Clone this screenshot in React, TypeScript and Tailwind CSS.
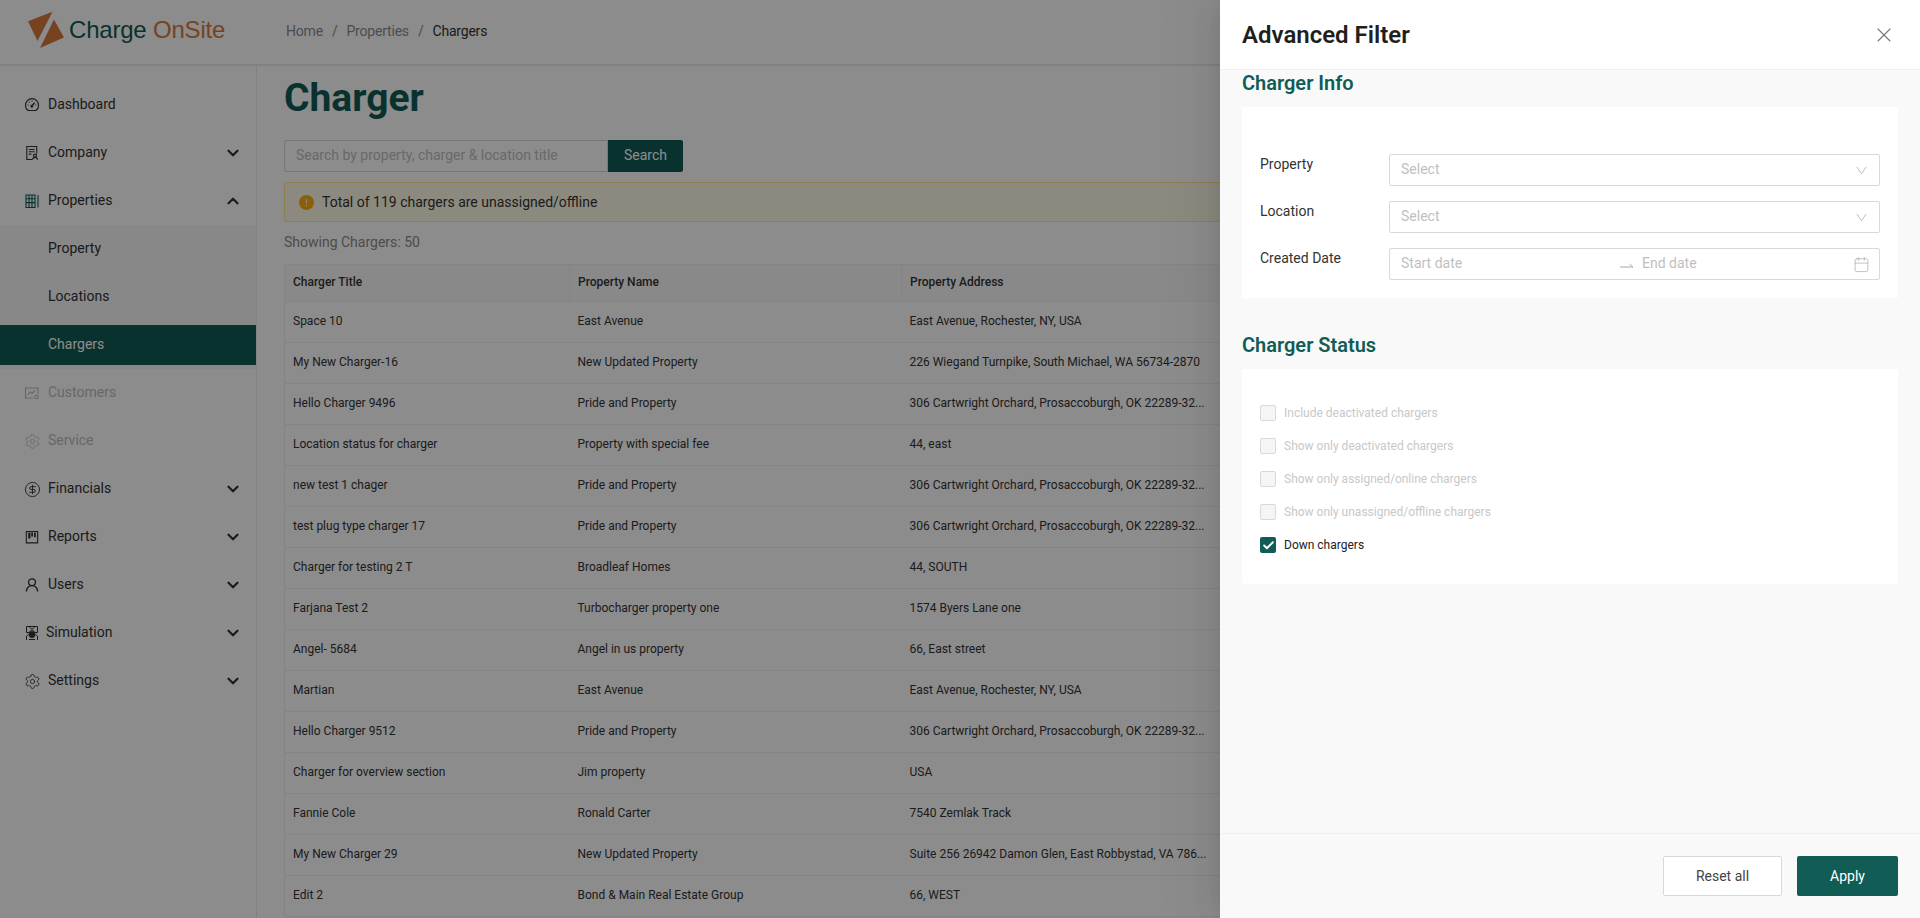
import { ChevronDown, ChevronUp, Settings, CircleDollarSign, X, Check, Calendar } from "lucide-react"
import { AiFillExclamationCircle } from "react-icons/ai"
import type { ReactNode } from "react"

const rows = [
  ["Space 10", "East Avenue", "East Avenue, Rochester, NY, USA"],
  ["My New Charger-16", "New Updated Property", "226 Wiegand Turnpike, South Michael, WA 56734-2870"],
  ["Hello Charger 9496", "Pride and Property", "306 Cartwright Orchard, Prosaccoburgh, OK 22289-32..."],
  ["Location status for charger", "Property with special fee", "44, east"],
  ["new test 1 chager", "Pride and Property", "306 Cartwright Orchard, Prosaccoburgh, OK 22289-32..."],
  ["test plug type charger 17", "Pride and Property", "306 Cartwright Orchard, Prosaccoburgh, OK 22289-32..."],
  ["Charger for testing 2 T", "Broadleaf Homes", "44, SOUTH"],
  ["Farjana Test 2", "Turbocharger property one", "1574 Byers Lane one"],
  ["Angel- 5684", "Angel in us property", "66, East street"],
  ["Martian", "East Avenue", "East Avenue, Rochester, NY, USA"],
  ["Hello Charger 9512", "Pride and Property", "306 Cartwright Orchard, Prosaccoburgh, OK 22289-32..."],
  ["Charger for overview section", "Jim property", "USA"],
  ["Fannie Cole", "Ronald Carter", "7540 Zemlak Track"],
  ["My New Charger 29", "New Updated Property", "Suite 256 26942 Damon Glen, East Robbystad, VA 786..."],
  ["Edit 2", "Bond & Main Real Estate Group", "66, WEST"],
]

const statusOptions = [
  "Include deactivated chargers",
  "Show only deactivated chargers",
  "Show only assigned/online chargers",
  "Show only unassigned/offline chargers",
]

function DashboardIcon() {
  return (
    <svg viewBox="0 0 16 16" className="w-4 h-4" fill="none" stroke="currentColor" strokeWidth="1.1">
      <path d="M4 13.5a6.6 6.6 0 1 1 8 0z" />
      <path d="M8 8.8l2.6-3" strokeWidth="1.3" />
      <path d="M3.6 8h1M11.4 8h1M8 3.6v1M4.9 4.9l.7.7" />
      <circle cx="7.8" cy="9.2" r=".9" fill="currentColor" />
    </svg>
  )
}

function CompanyIcon() {
  return (
    <svg viewBox="0 0 16 16" className="w-4 h-4" fill="none" stroke="currentColor" strokeWidth="1.1">
      <path d="M8 14.5H2.8V1.5h9.9v7" />
      <path d="M4.8 4.5h5.8M4.8 6.8h5.8M4.8 9.1h2.5" />
      <circle cx="11" cy="10.6" r="1.5" />
      <path d="M8.5 14.8c.2-1.5 1.2-2.4 2.5-2.4s2.3.9 2.5 2.4" />
    </svg>
  )
}

function PropertiesIcon() {
  return (
    <svg viewBox="0 0 16 16" className="w-4 h-4" fill="none" stroke="currentColor" strokeWidth="1.1">
      <path d="M2 2h9v12.5H2zM2 5.8h9M2 9.6h9M5 2v12.5M8 2v12.5M14 2v12.5" />
    </svg>
  )
}

function CustomersIcon() {
  return (
    <svg viewBox="0 0 16 16" className="w-4 h-4" fill="none" stroke="currentColor" strokeWidth="1.1">
      <path d="M9.5 13H1.5V3h12.5v6" />
      <path d="M3.5 10l2.5-3 2 1.5 3-3" />
      <circle cx="12.5" cy="12" r="1.8" />
    </svg>
  )
}

function ReportsIcon() {
  return (
    <svg viewBox="0 0 16 16" className="w-4 h-4" fill="currentColor">
      <path d="M1.8 2h12.4v12.4H1.8zM2.9 3.1v10.2h10.2V3.1z" />
      <path d="M4.2 3.5h2.2v6H4.2zM7.2 3.5h1.8v4H7.2zM10 3.5h1.8v4.8H10z" />
    </svg>
  )
}

function UserIcon() {
  return (
    <svg viewBox="0 0 16 16" className="w-4 h-4" fill="none" stroke="currentColor" strokeWidth="1.3">
      <circle cx="8" cy="5.2" r="3.4" />
      <path d="M2.4 14.4c0-3.2 2.4-5.8 5.6-5.8s5.6 2.6 5.6 5.8" />
    </svg>
  )
}

function SimulationIcon() {
  return (
    <svg viewBox="0 0 16 16" className="w-4 h-4" fill="none" stroke="currentColor" strokeWidth="1">
      <path d="M2.5 1.5h11v6h-11z" />
      <path d="M5 1.5l3 3 3-3M5 7.5l3-3 3 3" />
      <ellipse cx="8" cy="9.5" rx="3" ry="3" fill="currentColor" />
      <path d="M2.5 15v-4l2-1.5M13.5 15v-4l-2-1.5M5 14.5h6" />
    </svg>
  )
}

function SelectArrow() {
  return (
    <svg viewBox="0 0 12 10" className="w-[11px] h-[9px] text-[#b4b4b4]" fill="none" stroke="currentColor" strokeWidth="1">
      <path d="M.8 1L6 8.6L11.2 1" />
    </svg>
  )
}

type NavItemProps = {
  icon?: ReactNode
  label: string
  chevron?: "up" | "down"
  active?: boolean
  disabled?: boolean
  tight?: boolean
}

function NavItem({ icon, label, chevron, active, disabled, tight }: NavItemProps) {
  const tone = active
    ? "bg-[#125c56] text-white"
    : disabled
      ? "text-[#bdbdbd]"
      : "text-[#333333]"
  return (
    <div className={`flex items-center h-10 pl-6 pr-[14px] text-sm ${tone}`}>
      <span className={`${tight ? "w-[22px]" : "w-6"} shrink-0 flex items-center`}>{icon}</span>
      <span className="flex-1 mb-[2px]">{label}</span>
      {chevron === "down" && <ChevronDown size={18} strokeWidth={3} />}
      {chevron === "up" && <ChevronUp size={18} strokeWidth={3} />}
    </div>
  )
}

function SelectBox({ placeholder }: { placeholder: string }) {
  return (
    <div className="flex items-center justify-between w-[491px] h-8 pl-[11px] pr-[12px] bg-white border border-[#d9d9d9] rounded-[2px] text-sm text-[#bfbfbf]">
      <span className="mb-[2px]">{placeholder}</span>
      <SelectArrow />
    </div>
  )
}

function App() {
  return (
    <div className="relative h-[918px] overflow-hidden bg-white font-[Roboto,sans-serif] text-[#333333]">
      {/* Top bar */}
      <header className="flex items-center h-[66px] border-b-2 border-[#ececec]">
        <div className="flex items-center w-[286px] pl-7">
          <svg viewBox="0 0 37 38" className="w-[37px] h-[38px] shrink-0 mb-[4px]" fill="#d9783c">
            <path d="M0 10.3L24.5 .7L9.5 30z" />
            <path d="M26 8.5L36 26.5L12 37z" />
          </svg>
          <span className="ml-[4px] mb-[4px] font-['Liberation_Sans',sans-serif] text-2xl leading-none tracking-[-0.2px] whitespace-nowrap">
            <span className="text-[#125c56]">Charge</span> <span className="text-[#d9783c]">OnSite</span>
          </span>
        </div>
        <nav className="flex items-center gap-[9px] mb-[3px] text-sm tracking-[-0.2px] text-[#8c8c8c]">
          <span>Home</span>
          <span>/</span>
          <span>Properties</span>
          <span>/</span>
          <span className="text-[#333333]">Chargers</span>
        </nav>
      </header>

      <div className="flex h-[852px]">
        {/* Sidebar */}
        <aside className="w-[257px] shrink-0 border-r border-[#ececec] pt-[19px] flex flex-col">
          <div className="flex flex-col gap-2">
            <NavItem icon={<DashboardIcon />} label="Dashboard" />
            <NavItem icon={<CompanyIcon />} label="Company" chevron="down" />
            <NavItem icon={<span className="text-[#125c56]"><PropertiesIcon /></span>} label="Properties" chevron="up" />
          </div>
          <div className="flex flex-col gap-2 mt-1 mb-1 py-1 bg-[#f7f7f7]">
            <NavItem label="Property" />
            <NavItem label="Locations" />
            <NavItem label="Chargers" active />
          </div>
          <div className="flex flex-col gap-2">
            <NavItem icon={<CustomersIcon />} label="Customers" disabled />
            <NavItem icon={<Settings size={17} strokeWidth={1.2} />} label="Service" disabled />
            <NavItem icon={<CircleDollarSign size={17} strokeWidth={1.3} />} label="Financials" chevron="down" />
            <NavItem icon={<ReportsIcon />} label="Reports" chevron="down" />
            <NavItem icon={<UserIcon />} label="Users" chevron="down" />
            <NavItem icon={<SimulationIcon />} label="Simulation" chevron="down" tight />
            <NavItem icon={<Settings size={17} strokeWidth={1.2} />} label="Settings" chevron="down" />
          </div>
        </aside>

        {/* Main content */}
        <main className="flex-1 pl-[27px] pr-7 pt-2">
          <h1 className="text-[39px] leading-[48px] font-bold text-[#125c56]">Charger</h1>
          <div className="flex mt-[18px]">
            <div className="flex items-center w-[324px] h-8 pl-[11px] pb-[2px] border border-[#d9d9d9] rounded-l-[2px] text-sm text-[#bfbfbf]">
              Search by property, charger &amp; location title
            </div>
            <button className="w-[75px] h-8 pb-[2px] bg-[#125c56] text-white text-sm rounded-r-[2px]">Search</button>
          </div>
          <div className="flex items-center gap-[7px] h-10 mt-[10px] pl-[13px] pr-4 bg-[#fffbe6] border border-[#ffe58f] rounded-[2px] text-sm">
            <AiFillExclamationCircle size={17} className="text-[#faad14] shrink-0" />
            <span>Total of 119 chargers are unassigned/offline</span>
          </div>
          <p className="mt-[10px] text-sm leading-5 text-[#8c8c8c]">Showing Chargers: 50</p>
          <table className="w-full mt-3 table-fixed border-l border-t border-[#f0f0f0] text-xs">
            <colgroup>
              <col className="w-[285px]" />
              <col className="w-[332px]" />
              <col className="w-[318px]" />
              <col />
            </colgroup>
            <thead>
              <tr className="h-[37px] bg-[#fafafa] border-b border-[#f0f0f0] text-left">
                <th className="px-2 pb-[2px] font-medium">Charger Title</th>
                <th className="px-2 pb-[2px] font-medium border-l border-[#f0f0f0]">Property Name</th>
                <th className="px-2 pb-[2px] font-medium border-l border-[#f0f0f0]">Property Address</th>
                <th />
              </tr>
            </thead>
            <tbody>
              {rows.map((row) => (
                <tr key={row[0]} className="h-[41px] border-b border-[#f0f0f0]">
                  <td className="px-2 pb-[2px]">{row[0]}</td>
                  <td className="px-2 pb-[2px]">{row[1]}</td>
                  <td className="px-2 pb-[2px] whitespace-nowrap">{row[2]}</td>
                  <td />
                </tr>
              ))}
            </tbody>
          </table>
        </main>
      </div>

      {/* Drawer mask */}
      <div className="absolute inset-0 bg-black/45" />

      {/* Advanced filter drawer */}
      <div className="absolute top-0 right-0 bottom-0 w-[700px] flex flex-col bg-[#f9f9f9] shadow-[-6px_0_16px_-8px_rgba(0,0,0,0.08),-9px_0_28px_0_rgba(0,0,0,0.05),-12px_0_48px_16px_rgba(0,0,0,0.03)]">
        <div className="flex items-center justify-between h-[70px] shrink-0 pl-[22px] pr-[24px] bg-white border-b border-[#efefef]">
          <h2 className="text-2xl font-semibold text-[#1f1f1f]">Advanced Filter</h2>
          <X size={24} strokeWidth={1.1} className="text-[#777777]" />
        </div>

        <div className="flex-1 px-[22px]">
          <h3 className="mt-px text-xl leading-6 font-semibold text-[#125c56]">Charger Info</h3>
          <div className="mt-3 pt-[47px] pb-[18px] px-[18px] bg-white rounded-[2px]">
            <div className="flex items-start mb-[15px]">
              <label className="w-[129px] text-sm leading-5">Property</label>
              <SelectBox placeholder="Select" />
            </div>
            <div className="flex items-start mb-[15px]">
              <label className="w-[129px] text-sm leading-5">Location</label>
              <SelectBox placeholder="Select" />
            </div>
            <div className="flex items-start">
              <label className="w-[129px] text-sm leading-5">Created Date</label>
              <div className="flex items-center w-[491px] h-8 pl-[11px] pr-[9px] bg-white border border-[#d9d9d9] rounded-[2px] text-sm text-[#bfbfbf]">
                <span className="w-[219px] mb-[2px]">Start date</span>
                <svg viewBox="0 0 14 8" className="w-[14px] h-2 mt-[2px] text-[#a8a8a8]" fill="none" stroke="currentColor" strokeWidth="1">
                  <path d="M0 6h13L9.5 3" />
                </svg>
                <span className="ml-[8px] flex-1 mb-[2px]">End date</span>
                <Calendar size={17} strokeWidth={1} className="text-[#a8a8a8]" />
              </div>
            </div>
          </div>

          <h3 className="mt-[35px] text-xl leading-6 font-semibold text-[#125c56]">Charger Status</h3>
          <div className="mt-3 pt-[36px] pb-[31px] px-[18px] bg-white rounded-[2px] flex flex-col gap-[17px]">
            {statusOptions.map((option) => (
              <div key={option} className="flex items-center gap-2 h-4 text-xs text-[#c8c8c8]">
                <span className="w-4 h-4 bg-[#f5f5f5] border border-[#d9d9d9] rounded-[2px]" />
                <span>{option}</span>
              </div>
            ))}
            <div className="flex items-center gap-2 h-4 text-xs text-[#222222]">
              <span className="flex items-center justify-center w-4 h-4 bg-[#125c56] rounded-[2px]">
                <Check size={13} strokeWidth={3.6} className="text-white" />
              </span>
              <span>Down chargers</span>
            </div>
          </div>
        </div>

        <div className="flex items-center justify-end gap-[15px] h-[85px] shrink-0 pr-[22px] border-t border-[#efefef]">
          <button className="w-[119px] h-10 pb-px bg-white border border-[#d9d9d9] rounded-[2px] text-sm text-[#444444]">Reset all</button>
          <button className="w-[101px] h-10 pb-px bg-[#125c56] rounded-[2px] text-sm text-white">Apply</button>
        </div>
      </div>
    </div>
  )
}

export default App
